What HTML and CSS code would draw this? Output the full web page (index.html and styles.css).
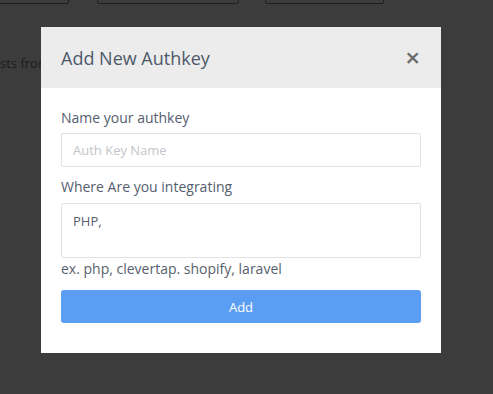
FILE: index.html
```html
<!DOCTYPE html>
<html>
<head>
    <meta charset="utf-8">
    <link rel="stylesheet" href="styles.css">
</head>
<body>
<div class="page">
    <div class="toolbar">
        <div class="tool-btn tool-btn-first"></div>
        <div class="tool-btn tool-btn-mid"></div>
        <div class="tool-btn tool-btn-last"></div>
    </div>
    <div class="page-text">sts from</div>
</div>

<!-- Add authkey modal -->
<div class="modal">
    <div class="modal-header">
        <span class="modal-title">Add New Authkey</span>
        <span class="modal-close">&times;</span>
    </div>
    <div class="modal-body">
        <label class="field-label">Name your authkey</label>
        <input class="field-input" type="text" placeholder="Auth Key Name">

        <label class="field-label field-label-gap">Where Are you integrating</label>
        <textarea class="field-textarea">PHP,</textarea>
        <div class="field-help">ex. php, clevertap. shopify, laravel</div>

        <button class="button">Add</button>
    </div>
</div>
</body>
</html>
```

FILE: styles.css
```css
body {
    margin: 0;
    width: 493px;
    height: 394px;
    overflow: hidden;
    background: #3c3c3c;
    font-family: "Open Sans", "Noto Sans", sans-serif;
    position: relative;
}

/* page behind the overlay */
.toolbar {
    display: flex;
    margin-top: -30px;
}
.tool-btn {
    height: 32px;
    border: 1px solid #1e1e1e;
    border-radius: 2px;
}
.tool-btn-first {
    width: 68px;
    margin-left: -1px;
    margin-right: 28px;
}
.tool-btn-mid {
    width: 140px;
    margin-right: 26px;
}
.tool-btn-last {
    width: 117px;
}
.page-text {
    margin-top: 50px;
    font-size: 13px;
    color: #1c1c1c;
    white-space: nowrap;
}

/* modal */
.modal {
    position: absolute;
    left: 41px;
    top: 27px;
    width: 400px;
    height: 326px;
    background: #ffffff;
}
.modal-header {
    height: 61px;
    background: #ececec;
    display: flex;
    align-items: center;
    justify-content: space-between;
    padding: 0 21px 0 20px;
    box-sizing: border-box;
}
.modal-title {
    font-size: 18px;
    color: #4f596a;
    margin-top: 1px;
}
.modal-close {
    font-size: 26px;
    font-weight: 600;
    color: #6b6b6b;
    line-height: 1;
    margin-top: -2px;
}
.modal-body {
    padding: 20px 20px 0 20px;
}
.field-label {
    display: block;
    font-size: 14px;
    line-height: 20px;
    color: #555e6e;
    margin-bottom: 5px;
}
.field-label-gap {
    margin-top: 10px;
    margin-bottom: 6px;
}
.field-input,
.field-textarea {
    display: block;
    width: 100%;
    box-sizing: border-box;
    border: 1px solid #e2e2e2;
    border-radius: 2px;
    font-family: inherit;
    font-size: 13px;
    color: #555e6b;
    padding: 6px 11px;
    outline: none;
}
.field-input {
    height: 34px;
}
.field-input::placeholder {
    color: #c3c6cc;
}
.field-textarea {
    height: 55px;
    resize: none;
    padding-top: 8px;
    margin: 0;
}
.field-help {
    font-size: 14px;
    line-height: 20px;
    color: #575f6d;
    margin-top: 1px;
}
.button {
    display: block;
    width: 100%;
    height: 33px;
    margin-top: 11px;
    background: #5b9df3;
    color: white;
    border: none;
    border-radius: 3px;
    font-family: inherit;
    font-size: 13px;
    cursor: pointer;
}
```
